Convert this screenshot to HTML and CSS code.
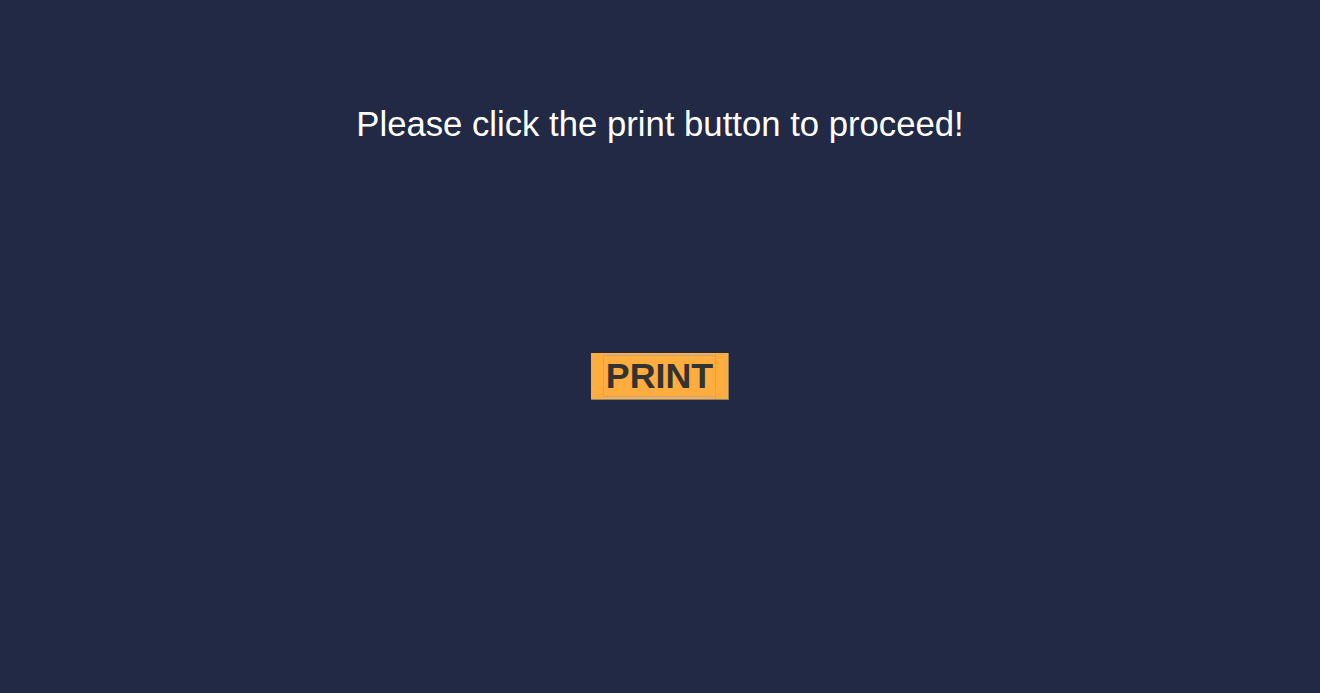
FILE: index.html
```html
<!DOCTYPE html>
<html>
<head>
<meta charset="utf-8">
<link rel="stylesheet" href="styles.css">
</head>
<body>
<main class="page">
  <h1 class="message">Please click the print button to proceed!</h1>
  <div class="action">
    <button class="print-btn"><span class="print-label">PRINT</span></button>
  </div>
</main>
</body>
</html>
```
FILE: styles.css
```css
html, body {
  margin: 0;
  padding: 0;
  height: 100%;
  background: #212944;
}
.page {
  display: flex;
  flex-direction: column;
  align-items: center;
  font-family: "Liberation Sans", Arial, sans-serif;
}
.message {
  margin: 104px 0 0;
  font-size: 34.7px;
  font-weight: normal;
  line-height: 40px;
  color: #ffffff;
}
.action {
  margin-top: 209px;
}
.print-btn {
  display: block;
  margin: 0;
  padding: 2px 12px 2px 12px;
  background: #ffad3f;
  border: none;
  border-right: 1px solid #8d806c;
  border-bottom: 1px solid #8d806c;
  font-family: "Liberation Sans", Arial, sans-serif;
  font-size: 35.8px;
  font-weight: bold;
  color: #333333;
  cursor: pointer;
}
.print-label {
  display: block;
  padding: 0 2px;
  line-height: 40px;
  border: 1px solid #b3aaa0;
}
```
